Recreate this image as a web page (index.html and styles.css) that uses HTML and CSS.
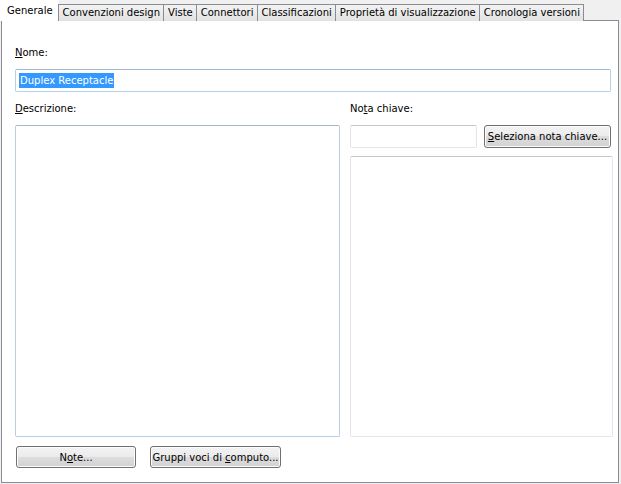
FILE: index.html
```html
<!DOCTYPE html>
<html lang="it">
<head>
  <meta charset="UTF-8">
  <title>Proprietà</title>
  <link rel="stylesheet" href="styles.css">
</head>
<body>

  <div class="tabs">
    <div class="tab active">Generale</div>
    <div class="tab">Convenzioni design</div>
    <div class="tab">Viste</div>
    <div class="tab">Connettori</div>
    <div class="tab">Classificazioni</div>
    <div class="tab">Proprietà di visualizzazione</div>
    <div class="tab">Cronologia versioni</div>
  </div>

  <div class="panel">
    <label class="label"><u>N</u>ome:</label>
    <div class="textbox name-box"><span class="selected">Duplex Receptacle</span></div>

    <div class="columns">
      <div class="col-left">
        <label class="label"><u>D</u>escrizione:</label>
        <div class="textbox desc-box"></div>
      </div>
      <div class="col-right">
        <label class="label">No<u>t</u>a chiave:</label>
        <div class="key-row">
          <div class="textbox grey key-box"></div>
          <button class="btn key-btn"><u>S</u>eleziona nota chiave...</button>
        </div>
        <div class="textbox grey note-box"></div>
      </div>
    </div>

    <div class="bottom-row">
      <button class="btn notes-btn">N<u>o</u>te...</button>
      <button class="btn groups-btn">Gruppi voci di <u>c</u>omputo...</button>
    </div>
  </div>

</body>
</html>
```

FILE: styles.css
```css
body {
  margin: 0;
  width: 621px;
  height: 484px;
  background-color: #f0f0f0;
  font-family: "DejaVu Sans", Tahoma, sans-serif;
  font-size: 10px;
  color: #000;
  overflow: hidden;
}

u {
  text-decoration: underline;
  text-underline-offset: 1px;
}

.tabs {
  display: flex;
  align-items: flex-end;
  height: 21px;
  position: relative;
  z-index: 2;
}

.tab {
  height: 17px;
  line-height: 16px;
  padding: 0 3px 0 4px;
  margin-left: -1px;
  border: 1px solid #898c95;
  border-bottom: none;
  background: linear-gradient(#f3f3f3, #e2e2e2);
  box-sizing: border-box;
  white-space: nowrap;
}

.tab.active {
  height: 21px;
  line-height: 19px;
  margin-left: 0;
  padding: 0 5px 0 6px;
  background: #fff;
  border-color: #fff;
}

.panel {
  margin-top: -1px;
  margin-left: 1px;
  width: 618px;
  height: 463px;
  box-sizing: border-box;
  border: 1px solid #898c95;
  background: #fff;
  padding: 25px 0 0 13px;
}

.label {
  display: block;
  height: 14px;
  line-height: 14px;
  margin-bottom: 9px;
  color: #000;
}

.textbox {
  box-sizing: border-box;
  border: 1px solid #b5cfe7;
  border-top-color: #9fb9d3;
  border-radius: 2px;
  background: #fff;
}

.textbox.grey {
  border-color: #e3e5e9;
  border-top-color: #c4c6cb;
}

.name-box {
  width: 596px;
  height: 23px;
  padding: 3px 0 0 3px;
  margin-bottom: 10px;
}

.selected {
  display: inline-block;
  background: #3399ff;
  color: #fff;
  line-height: 15px;
  padding: 0 1px;
}

.columns {
  display: flex;
  gap: 10px;
}

.col-left {
  width: 325px;
}

.desc-box {
  width: 325px;
  height: 312px;
}

.col-right {
  width: 263px;
}

.key-row {
  display: flex;
  gap: 7px;
  margin-bottom: 8px;
}

.key-box {
  width: 127px;
  height: 23px;
}

.btn {
  box-sizing: border-box;
  height: 23px;
  border: 1px solid #707070;
  border-radius: 3px;
  background: linear-gradient(#f3f3f3 0%, #ebebeb 50%, #dddddd 50%, #d2d2d2 100%);
  box-shadow: inset 0 0 0 1px #fcfcfc;
  font-family: inherit;
  font-size: inherit;
  color: #000;
  padding: 0;
  white-space: nowrap;
}

.key-btn {
  width: 127px;
}

.note-box {
  width: 263px;
  height: 281px;
}

.bottom-row {
  display: flex;
  gap: 14px;
  margin-top: 9px;
  padding-left: 1px;
}

.notes-btn {
  width: 120px;
  height: 22px;
}

.groups-btn {
  width: 131px;
  height: 22px;
}
```
